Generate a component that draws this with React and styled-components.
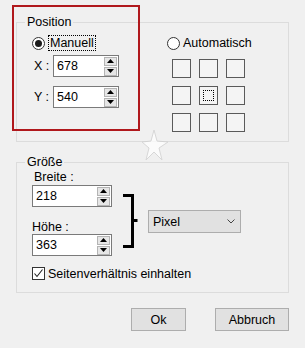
import React from 'react';
import styled, { createGlobalStyle } from 'styled-components';

const Global = createGlobalStyle`
  html, body { margin: 0; padding: 0; background: #f0f0f0; }
  body {
    font-family: "Liberation Sans", Arial, sans-serif;
    font-size: 12.5px;
    color: #000;
  }
`;

const Page = styled.div`
  position: relative;
  width: 305px;
  height: 348px;
  box-sizing: border-box;
  padding: 15px 16px 0 16px;
  display: flex;
  flex-direction: column;
`;

const Group = styled.fieldset`
  margin: ${(p) => p.$mt || 0}px 0 0 0;
  padding: 0 0 ${(p) => p.$pb}px 15px;
  border: 1px solid #dcdcdc;
  min-width: 0;
`;

const Legend = styled.legend`
  margin-left: -7px;
  padding: 0 2px;
  line-height: 14px;
  height: 14px;
`;

const PosContent = styled.div`
  display: flex;
  align-items: flex-start;
  padding-top: 6px;
`;

const LeftCol = styled.div`
  width: 135px;
  display: flex;
  flex-direction: column;
`;

const RightCol = styled.div`
  display: flex;
  flex-direction: column;
`;

const RadioRow = styled.label`
  display: flex;
  align-items: center;
  height: 16px;
  gap: 3px;
`;

const RadioCircle = styled.span`
  width: 13px;
  height: 13px;
  box-sizing: border-box;
  border: 1px solid #333;
  border-radius: 50%;
  background: #fff;
  display: flex;
  align-items: center;
  justify-content: center;
  &::after {
    content: '';
    display: ${(p) => (p.$checked ? 'block' : 'none')};
    width: 7px;
    height: 7px;
    border-radius: 50%;
    background: #1a1a1a;
  }
`;

const Focus = styled.span`
  border: 1px dotted #000;
  padding: 0 1px;
  line-height: 14px;
`;

const FieldRow = styled.div`
  display: flex;
  align-items: center;
  margin-top: ${(p) => p.$mt}px;
`;

const AxisLabel = styled.span`
  width: 19px;
  margin-left: 2px;
  white-space: pre;
`;

const Input = styled.div`
  width: ${(p) => p.$w}px;
  height: 22px;
  box-sizing: border-box;
  border: 1px solid #7a7a7a;
  background: #fff;
  display: flex;
  align-items: center;
  justify-content: space-between;
  padding: 0 1px 0 3px;
`;

const Value = styled.span`
  line-height: 14px;
`;

const Spin = styled.div`
  display: flex;
  flex-direction: column;
  gap: 1px;
`;

const SpinBtn = styled.div`
  width: 13px;
  height: 9px;
  box-sizing: border-box;
  border: 1px solid #b4b4b4;
  background: #e6e6e6;
  display: flex;
  align-items: center;
  justify-content: center;
`;

const Arrow = ({ up }) => (
  <svg width="7" height="4" viewBox="0 0 7 4">
    <polygon points={up ? '3.5,0 7,4 0,4' : '0,0 7,0 3.5,4'} fill="#000" />
  </svg>
);

const Spinner = () => (
  <Spin>
    <SpinBtn><Arrow up /></SpinBtn>
    <SpinBtn><Arrow /></SpinBtn>
  </Spin>
);

const AnchorGrid = styled.div`
  display: grid;
  grid-template-columns: repeat(3, 19px);
  grid-auto-rows: 19px;
  gap: 8px;
  margin: 8px 0 0 5px;
`;

const Anchor = styled.div`
  box-sizing: border-box;
  border: 1px solid #5a5a5a;
  background: #f4f4f4;
  padding: 3px;
  &::after {
    content: '';
    display: ${(p) => (p.$focus ? 'block' : 'none')};
    width: 100%;
    height: 100%;
    box-sizing: border-box;
    border: 1px dotted #000;
  }
`;

const SizeRow = styled.div`
  display: flex;
  align-items: flex-start;
`;

const SizeCol = styled.div`
  display: flex;
  flex-direction: column;
`;

const FieldLabel = styled.span`
  line-height: 14px;
  height: 14px;
  margin: ${(p) => p.$mt}px 0 ${(p) => p.$mb}px ${(p) => p.$ml}px;
  white-space: pre;
`;

const Bracket = styled.svg`
  margin: 25px 0 0 11px;
  flex: none;
`;

const Select = styled.div`
  margin: 41px 0 0 10px;
  width: 93px;
  height: 23px;
  box-sizing: border-box;
  border: 1px solid #adadad;
  background: #e1e1e1;
  display: flex;
  align-items: center;
  justify-content: space-between;
  padding: 0 5px 0 4px;
`;

const CheckRow = styled.label`
  display: flex;
  align-items: center;
  gap: 3px;
  height: 13px;
  margin-top: 11px;
`;

const CheckBox = styled.span`
  width: 13px;
  height: 13px;
  box-sizing: border-box;
  border: 1px solid #333;
  background: #fff;
  display: flex;
  align-items: center;
  justify-content: center;
`;

const Buttons = styled.div`
  display: flex;
  justify-content: flex-end;
  gap: 29px;
  margin-top: 15px;
`;

const Button = styled.div`
  width: ${(p) => p.$w}px;
  height: 23px;
  box-sizing: border-box;
  border: 1px solid #adadad;
  background: #e1e1e1;
  display: flex;
  align-items: center;
  justify-content: center;
`;

const Highlight = styled.div`
  position: absolute;
  left: 12px;
  top: 5px;
  width: 128px;
  height: 126px;
  box-sizing: border-box;
  border: 2px solid #b0181c;
  pointer-events: none;
`;

const Watermark = styled.svg`
  position: absolute;
  left: 141px;
  top: 129px;
  pointer-events: none;
  opacity: 0.75;
`;

export default function App() {
  return (
    <>
      <Global />
      <Page>
        <Group $pb={9}>
          <Legend>Position</Legend>
          <PosContent>
            <LeftCol>
              <RadioRow>
                <RadioCircle $checked />
                <Focus>Manuell</Focus>
              </RadioRow>
              <FieldRow $mt={4}>
                <AxisLabel>X :</AxisLabel>
                <Input $w={66}>
                  <Value>678</Value>
                  <Spinner />
                </Input>
              </FieldRow>
              <FieldRow $mt={9}>
                <AxisLabel>Y :</AxisLabel>
                <Input $w={66}>
                  <Value>540</Value>
                  <Spinner />
                </Input>
              </FieldRow>
            </LeftCol>
            <RightCol>
              <RadioRow>
                <RadioCircle />
                <span>Automatisch</span>
              </RadioRow>
              <AnchorGrid>
                {Array.from({ length: 9 }).map((_, i) => (
                  <Anchor key={i} $focus={i === 4} />
                ))}
              </AnchorGrid>
            </RightCol>
          </PosContent>
        </Group>

        <Group $mt={13} $pb={12}>
          <Legend>Größe</Legend>
          <SizeRow>
            <SizeCol>
              <FieldLabel $mt={1} $mb={1} $ml={2}>Breite :</FieldLabel>
              <Input $w={80}>
                <Value>218</Value>
                <Spinner />
              </Input>
              <FieldLabel $mt={13} $mb={0} $ml={0}>Höhe :</FieldLabel>
              <Input $w={80}>
                <Value>363</Value>
                <Spinner />
              </Input>
            </SizeCol>
            <Bracket width="15" height="54" viewBox="0 0 15 54">
              <path d="M0 1.5 H9.5 V52.5 H0 M9.5 26.5 H14.5" stroke="#000" strokeWidth="3" fill="none" />
            </Bracket>
            <Select>
              <span>Pixel</span>
              <svg width="8" height="5" viewBox="0 0 8 5">
                <path d="M0.5 0.5 L4 4 L7.5 0.5" stroke="#444" strokeWidth="1" fill="none" />
              </svg>
            </Select>
          </SizeRow>
          <CheckRow>
            <CheckBox>
              <svg width="11" height="11" viewBox="0 0 11 11">
                <path d="M1.5 5.5 L4 8.5 L9.5 1.5" stroke="#222" strokeWidth="1.1" fill="none" />
              </svg>
            </CheckBox>
            <span>Seitenverhältnis einhalten</span>
          </CheckRow>
        </Group>

        <Buttons>
          <Button $w={55}>Ok</Button>
          <Button $w={74}>Abbruch</Button>
        </Buttons>

        <Highlight />
        <Watermark width="28" height="32" viewBox="0 0 28 32">
          <polygon
            points="13,1 16,12 27,13 18,19 21,31 13,23 5,31 8,19 1,13 10,12"
            fill="#ffffff"
            stroke="#cfcfcf"
            strokeWidth="1"
          />
        </Watermark>
      </Page>
    </>
  );
}
